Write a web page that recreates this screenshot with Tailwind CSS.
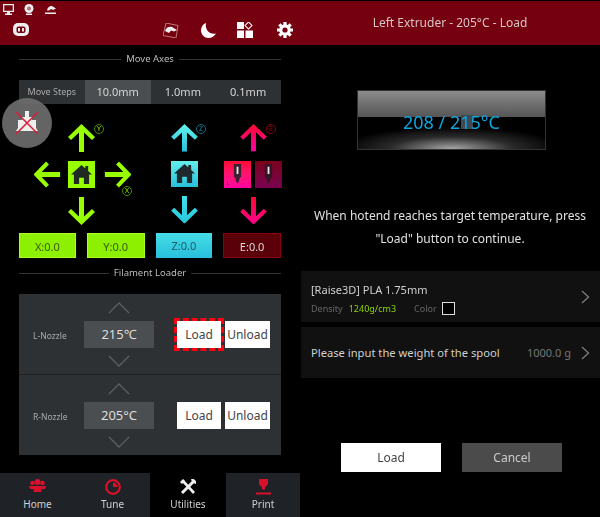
<!DOCTYPE html>
<html lang="en">
<head>
  <meta charset="UTF-8">
  <meta name="viewport" content="width=device-width, initial-scale=1.0">
  <title>Raise3D Touch Screen</title>
  <script src="https://cdn.jsdelivr.net/npm/@tailwindcss/browser@4"></script>
</head>
<body class="bg-black font-['Noto_Sans',sans-serif] overflow-hidden">

  <!-- Shared icons and gradients -->
  <svg class="absolute w-0 h-0">
    <defs>
      <linearGradient id="cyanUp" x1="0" y1="0" x2="0" y2="1"><stop offset="0" stop-color="#62f5ee"/><stop offset="1" stop-color="#27bfdc"/></linearGradient>
      <linearGradient id="cyanDown" x1="0" y1="1" x2="0" y2="0"><stop offset="0" stop-color="#40e4ea"/><stop offset="1" stop-color="#27c4dc"/></linearGradient>
      <linearGradient id="pinkUp" x1="0" y1="0" x2="0" y2="1"><stop offset="0" stop-color="#ff0a30"/><stop offset="1" stop-color="#ff00a8"/></linearGradient>
      <linearGradient id="pinkDown" x1="0" y1="1" x2="0" y2="0"><stop offset="0" stop-color="#ff0a30"/><stop offset="1" stop-color="#ff0090"/></linearGradient>
      <symbol id="arrow" viewBox="0 0 27 28"><polygon points="13.5,0 27,13 24,16 16,8.5 16,28 11,28 11,8.5 3,16 0,13"/></symbol>
      <symbol id="house" viewBox="0 0 22 20"><path d="M11 0 15 3.600V1h3v5.300L22 10h-3v10h-5.500v-6.500h-5V20H3V10H0Z"/></symbol>
      <symbol id="nozzle" viewBox="0 0 12 22"><path d="M2 0h8v14l-2 2v2l-2 4-2-4v-2l-2-2Z"/><rect x="5" y="3" width="2" height="8" fill="#e8e8e8"/></symbol>
      <symbol id="chevUp" viewBox="0 0 22 12"><path d="M1 11 11 1l10 10" fill="none" stroke="#5b5f62" stroke-width="1.300"/></symbol>
      <symbol id="chevDown" viewBox="0 0 22 12"><path d="M1 1l10 10L21 1" fill="none" stroke="#5b5f62" stroke-width="1.300"/></symbol>
      <symbol id="chevRight" viewBox="0 0 9 14"><path d="M1 1l6.500 6L1 13" fill="none" stroke="#77797b" stroke-width="1.400"/></symbol>
    </defs>
  </svg>

  <div class="flex w-[600px] h-[517px] blur-[0.5px] relative">

    <!-- Left screen: Utilities -->
    <div class="w-[300px] h-full relative flex flex-col">
      <header class="bg-[#75000f] h-[44px] mt-px relative shrink-0">
        <div class="flex items-center gap-[10px] pl-[3px] pt-[3px]">
          <svg class="w-[11px] h-[11px]" viewBox="0 0 11 11" fill="#eee"><path fill-rule="evenodd" d="M0 0h11v8H7v1.500h2V11H2V9.500h2V8H0Zm1.300 1.300v5.400h8.400V1.300Z"/></svg>
          <svg class="w-[10px] h-[11px]" viewBox="0 0 10 11"><circle cx="5" cy="4.500" r="4.500" fill="#eee"/><circle cx="5" cy="4.500" r="2" fill="#b07078"/><rect x="2" y="9.500" width="6" height="1.500" fill="#eee"/></svg>
          <svg class="w-[11px] h-[9px] ml-[1px]" viewBox="0 0 11 9" fill="#eee"><path d="M2 5.500C2.500 2 5 .5 7 1l4 2.500-3 1.500-2-1-2 1.500ZM0 7.500h11V9H0Z"/></svg>
        </div>
        <div class="flex items-center h-[24px] mt-[3px]">
          <svg class="w-[16px] h-[14px] ml-[13px]" viewBox="0 0 16 14"><rect width="16" height="13" rx="5" fill="#eee"/><rect x="3.500" y="3.500" width="9" height="6.500" rx="2" fill="#75000f"/><rect x="5" y="5" width="2" height="3.500" fill="#eee"/><rect x="9" y="5" width="2" height="3.500" fill="#eee"/></svg>
          <svg class="w-[16px] h-[15px] ml-[134px]" viewBox="0 0 16 15"><path d="M3 0 15 2.500 13 15 0 12.500Z" fill="none" stroke="#c99" stroke-width=".8"/><path d="M2 8C3 4.500 6 3 9 4l5 3-3 1.500-3-1-2 2.500Z" fill="#eee"/></svg>
          <svg class="w-[15px] h-[15px] ml-[22px]" viewBox="0 0 15 15" fill="#fff"><path d="M5 0C2 1 0 4 0 7.500 0 11.500 3.500 15 7.500 15c3.300 0 6-1.800 7.500-4.500C9 12 3.500 7 5 0Z"/></svg>
          <svg class="w-[16px] h-[16px] ml-[21px]" viewBox="0 0 16 16"><rect x="0" y="0" width="7" height="7" fill="#fff"/><rect x="0" y="8.500" width="7" height="7.500" fill="#fff"/><rect x="8.500" y="8.500" width="7.500" height="7.500" fill="#fff"/><rect x="9" y="1" width="5" height="5" transform="rotate(45 11.500 3.500)" fill="none" stroke="#fff"/></svg>
          <svg class="w-[16px] h-[16px] ml-[24px]" viewBox="0 0 16 16"><g stroke="#fff" stroke-width="3.200"><path d="M8 0v16M0 8h16M2.300 2.300l11.400 11.400M13.700 2.300 2.300 13.700"/></g><circle cx="8" cy="8" r="5.800" fill="#fff"/><circle cx="8" cy="8" r="2.600" fill="#75000f"/></svg>
        </div>
      </header>

      <!-- Move Axes -->
      <div class="flex items-center gap-[5px] mx-[19px] mt-[6px] h-[16px]">
        <div class="h-px bg-[#333] flex-1"></div>
        <span class="text-[9.5px] text-[#bbb]">Move Axes</span>
        <div class="h-px bg-[#333] flex-1"></div>
      </div>

      <div class="flex mx-[19px] mt-[13px] h-[24px] bg-[#2e3134] items-center text-center text-[#d5d5d5] text-[11px]">
        <div class="w-[66px] text-[9px] text-[#aaa]">Move Steps</div>
        <div class="w-[66px] h-full leading-[24px] bg-[#4a4e50]">10.0mm</div>
        <div class="w-[65px]">1.0mm</div>
        <div class="w-[66px]">0.1mm</div>
      </div>

      <div class="flex mt-[20px] h-[100px]">
        <!-- X / Y -->
        <div class="ml-[33px] w-[99px] grid grid-cols-[35px_27px_37px] grid-rows-[28px_27px_28px] gap-y-[9px] text-[#98ff00] relative">
          <svg class="col-start-2 w-[27px] h-[28px]" fill="#98ff00"><use href="#arrow"/></svg>
          <svg class="row-start-2 w-[28px] h-[27px] -rotate-90" fill="#98ff00"><use href="#arrow"/></svg>
          <div class="row-start-2 w-[27px] h-[27px] bg-[#98ff00] flex items-center justify-center">
            <svg class="w-[21px] h-[19px]" fill="#1f2a22"><use href="#house"/></svg>
          </div>
          <svg class="row-start-2 w-[28px] h-[27px] ml-[9px] rotate-90" fill="#98ff00"><use href="#arrow"/></svg>
          <svg class="row-start-3 col-start-2 w-[27px] h-[28px] rotate-180" fill="#98ff00"><use href="#arrow"/></svg>
          <span class="absolute left-[61px] top-0 w-[10px] h-[10px] rounded-full border border-[#4f8a00] text-[7px] leading-[8px] text-center">Y</span>
          <span class="absolute left-[89px] top-[62px] w-[10px] h-[10px] rounded-full border border-[#4f8a00] text-[7px] leading-[8px] text-center">X</span>
        </div>
        <!-- Z -->
        <div class="ml-[39px] w-[27px] flex flex-col gap-[9px] relative">
          <svg class="w-[27px] h-[28px]" fill="url(#cyanUp)"><use href="#arrow"/></svg>
          <div class="w-[27px] h-[27px] bg-linear-to-b from-[#62efec] to-[#27bfdc] flex items-center justify-center">
            <svg class="w-[21px] h-[19px]" fill="#1f2a2e"><use href="#house"/></svg>
          </div>
          <svg class="w-[27px] h-[28px] rotate-180" fill="url(#cyanDown)"><use href="#arrow"/></svg>
          <span class="absolute left-[25px] top-0 w-[10px] h-[10px] rounded-full border border-[#0e6c80] text-[#0e8ba0] text-[7px] leading-[8px] text-center">Z</span>
        </div>
        <!-- E -->
        <div class="ml-[26px] w-[58px] flex flex-col gap-[9px] relative">
          <svg class="w-[27px] h-[28px] ml-[16px]" fill="url(#pinkUp)"><use href="#arrow"/></svg>
          <div class="flex gap-[4px] h-[27px]">
            <div class="w-[27px] h-[27px] bg-linear-to-b from-[#ff0a30] to-[#ff00a0] relative flex justify-center pt-[3px]">
              <svg class="w-[11px] h-[20px]" fill="#3a2030"><use href="#nozzle"/></svg>
              <span class="absolute left-[3px] bottom-0 text-[5px] text-[#333]">L</span>
            </div>
            <div class="w-[27px] h-[27px] bg-linear-to-b from-[#7a0018] to-[#7a0050] relative flex justify-center pt-[3px]">
              <svg class="w-[11px] h-[20px]" fill="#351525"><use href="#nozzle"/></svg>
              <span class="absolute right-[2px] bottom-0 text-[5px] text-[#333]">R</span>
            </div>
          </div>
          <svg class="w-[27px] h-[28px] ml-[16px] rotate-180" fill="url(#pinkDown)"><use href="#arrow"/></svg>
          <span class="absolute left-[42px] top-0 w-[10px] h-[10px] rounded-full border border-[#8a0010] text-[#a00014] text-[7px] leading-[8px] text-center">E</span>
        </div>
      </div>

      <!-- Position readouts -->
      <div class="flex gap-[11px] mx-[19px] mt-[9px] h-[25px] text-[11px] leading-[25px] text-center">
        <div class="w-[57px] bg-[#8cf000] border border-[#a8ff20] text-[#3c5a10]">X:0.0</div>
        <div class="w-[58px] bg-[#8cf000] border border-[#a8ff20] text-[#3c5a10]">Y:0.0</div>
        <div class="w-[57px] bg-linear-to-b from-[#45dde6] to-[#27bfdc] text-[#1c5a68]">Z:0.0</div>
        <div class="w-[58px] bg-[#5a0008] border border-[#8a0010] text-[#d8d8d8]">E:0.0</div>
      </div>

      <!-- Filament Loader -->
      <div class="flex items-center gap-[5px] mx-[19px] mt-[7px] h-[16px]">
        <div class="h-px bg-[#333] flex-1"></div>
        <span class="text-[9.5px] text-[#bbb]">Filament Loader</span>
        <div class="h-px bg-[#333] flex-1"></div>
      </div>

      <div class="mx-[19px] mt-[13px] h-[161px] bg-[#2e3134] flex flex-col divide-y divide-[#1c1e20]">
        <div class="h-[81px] flex items-center relative">
          <span class="w-[65px] pl-[14px] mt-[4px] text-[8.5px] text-[#aaa]">L-Nozzle</span>
          <div class="flex flex-col items-center w-[70px]">
            <svg class="w-[22px] h-[12px] mb-[7px]"><use href="#chevUp"/></svg>
            <div class="w-[70px] h-[27px] bg-[#4a4e50] text-[#ddd] text-[13px] leading-[27px] text-center">215℃</div>
            <svg class="w-[22px] h-[12px] mt-[7px]"><use href="#chevDown"/></svg>
          </div>
          <div class="ml-[23px] w-[44px] h-[27px] bg-white text-[#444] text-[12px] leading-[27px] text-center outline-[3px] outline-dashed outline-[#ff0010]">Load</div>
          <div class="ml-[4px] w-[45px] h-[27px] bg-white text-[#444] text-[12px] leading-[27px] text-center">Unload</div>
        </div>
        <div class="h-[80px] flex items-center">
          <span class="w-[65px] pl-[14px] mt-[4px] text-[8.5px] text-[#aaa]">R-Nozzle</span>
          <div class="flex flex-col items-center w-[70px]">
            <svg class="w-[22px] h-[12px] mb-[7px]"><use href="#chevUp"/></svg>
            <div class="w-[70px] h-[27px] bg-[#4a4e50] text-[#ddd] text-[13px] leading-[27px] text-center">205°C</div>
            <svg class="w-[22px] h-[12px] mt-[7px]"><use href="#chevDown"/></svg>
          </div>
          <div class="ml-[23px] w-[44px] h-[27px] bg-white text-[#444] text-[12px] leading-[27px] text-center">Load</div>
          <div class="ml-[4px] w-[45px] h-[27px] bg-white text-[#444] text-[12px] leading-[27px] text-center">Unload</div>
        </div>
      </div>

      <!-- Bottom nav -->
      <nav class="mt-[18px] h-[44px] flex text-[10px] leading-[13px] text-[#d0d0d0] text-center">
        <div class="w-[75px] bg-[#1f2226] flex flex-col items-center">
          <svg class="w-[17px] h-[14px] mt-[6px]" viewBox="0 0 17 14" fill="#d8102a"><circle cx="3.500" cy="4" r="2.300"/><circle cx="13.500" cy="4" r="2.300"/><circle cx="8.500" cy="3" r="3"/><path d="M0 7h4v3H1Zm17 0h-4v3h3ZM3.500 7h10L12 13H5Z"/></svg>
          <span class="mt-[5px]">Home</span>
        </div>
        <div class="w-[75px] bg-[#1f2226] flex flex-col items-center">
          <svg class="w-[16px] h-[16px] mt-[6px]" viewBox="0 0 16 16"><circle cx="8" cy="8" r="6.800" fill="none" stroke="#d8102a" stroke-width="2.200"/><path d="M8 3.500V8h4.500A4.500 4.500 0 0 0 8 3.500Z" fill="#d8102a"/></svg>
          <span class="mt-[3px]">Tune</span>
        </div>
        <div class="w-[76px] flex flex-col items-center">
          <svg class="w-[16px] h-[16px] mt-[6px]" viewBox="0 0 16 16"><path d="M2.500 1.500 14 14" stroke="#eee" stroke-width="2.600"/><path d="M14 2 2 14" stroke="#eee" stroke-width="3"/><path d="M0 3 3 0l2 2-3 3Z" fill="#eee"/><path d="M11 0a4 4 0 0 1 5 5l-3-1-1-1Z" fill="#eee"/></svg>
          <span class="mt-[3px]">Utilities</span>
        </div>
        <div class="w-[74px] bg-[#1f2226] flex flex-col items-center">
          <svg class="w-[15px] h-[16px] mt-[6px]" viewBox="0 0 15 16" fill="#d8102a"><path d="M3 0h9v5l-3 3.500v2H6v-2L3 5Z"/><rect y="13.500" width="15" height="2"/></svg>
          <span class="mt-[3px]">Print</span>
        </div>
      </nav>

      <!-- Floating assistive button -->
      <div class="absolute left-[2px] top-[98px] w-[50px] h-[50px] rounded-full bg-[#6f6f6f]/90 flex items-center justify-center">
        <svg class="w-[26px] h-[26px]" viewBox="0 0 26 26"><path d="M11 1h4v6h3v3h4v8l2 3H2l2-3v-8h4V7h3Z" fill="#eee"/><path d="M2 2l22 22M24 2 2 24" stroke="#d8203a" stroke-width="1.600"/></svg>
      </div>
    </div>

    <!-- Right screen: Load dialog -->
    <div class="w-[300px] h-full flex flex-col">
      <header class="bg-[#75000f] h-[44px] mt-px shrink-0 text-center text-[#d8c4c4] text-[12px] leading-[44px]">Left Extruder - 205°C - Load</header>

      <div class="ml-[57px] mt-[45px] w-[189px] h-[60px] border border-[#333] relative flex flex-col">
        <div class="h-[26px] bg-linear-to-b from-[#8c8c8c] to-[#555]"></div>
        <div class="flex-1 bg-[radial-gradient(ellipse_60%_70%_at_50%_100%,#a8a8a8,#2a2a2a_55%,#000)]"></div>
        <div class="absolute left-[103px] top-[24px] w-[12px] h-[14px] bg-[#3d4a55]"></div>
        <div class="absolute inset-x-0 top-[18px] text-center text-[#0fa5dc] text-[18px] leading-[26px]">208 / 215°C</div>
      </div>

      <p class="mt-[54px] text-center text-[#e0e0e0] text-[12px] leading-[23px]">When hotend reaches target temperature, press<br>"Load" button to continue.</p>

      <div class="ml-px mt-[21px] h-[51px] bg-[#111] flex items-center pl-[10px] pr-[10px]">
        <div class="flex-1 pt-[5px]">
          <div class="text-[#d0d0d0] text-[11px] leading-[14px]">[Raise3D] PLA 1.75mm</div>
          <div class="flex items-center mt-[5px] text-[9px] h-[14px]">
            <span class="text-[#666]">Density</span>
            <span class="ml-[6px] text-[#8cd400]">1240g/cm3</span>
            <span class="ml-[18px] text-[#666]">Color</span>
            <span class="ml-[5px] w-[13px] h-[13px] border border-[#ddd] bg-black"></span>
          </div>
        </div>
        <svg class="w-[9px] h-[14px]"><use href="#chevRight"/></svg>
      </div>

      <div class="ml-px mt-[5px] h-[51px] bg-[#111] flex items-center pl-[10px] pr-[10px]">
        <span class="flex-1 text-[#d0d0d0] text-[11.2px] pt-px">Please input the weight of the spool</span>
        <span class="mr-[10px] text-[#777] text-[11px] pt-px">1000.0 g</span>
        <svg class="w-[9px] h-[14px]"><use href="#chevRight"/></svg>
      </div>

      <div class="flex ml-[41px] mt-[65px] gap-[21px] text-[12px] leading-[29px] text-center">
        <div class="w-[100px] h-[29px] bg-white text-[#444]">Load</div>
        <div class="w-[100px] h-[29px] bg-[#4b4b4b] text-[#ccc]">Cancel</div>
      </div>
    </div>

  </div>
</body>
</html>
